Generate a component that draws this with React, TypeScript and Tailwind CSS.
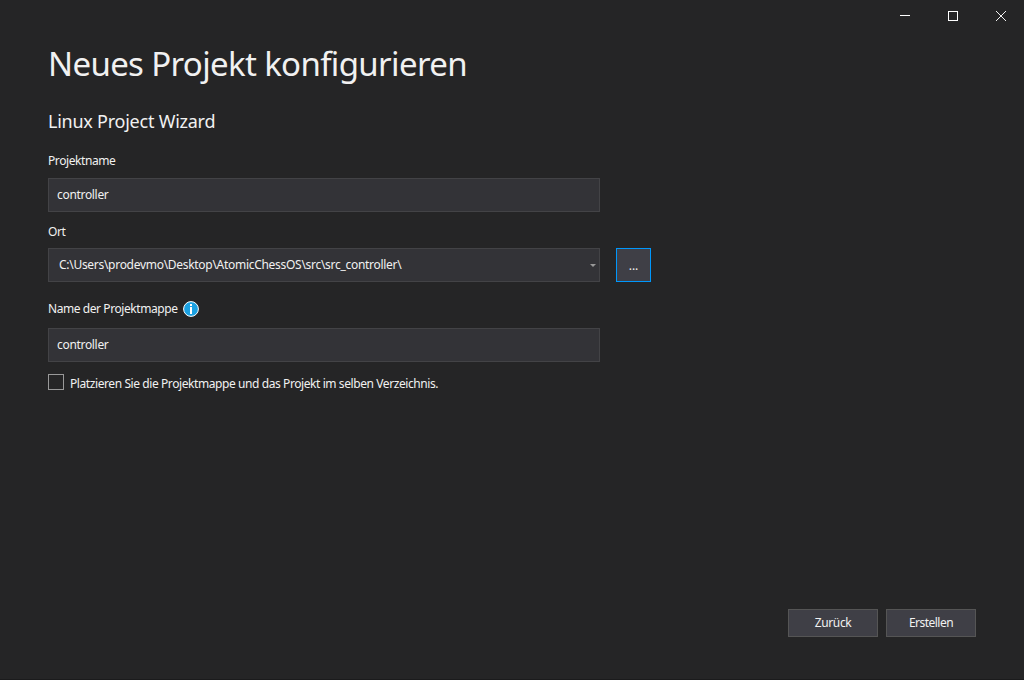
import React from "react";

const inputClass = "flex h-[34px] w-[552px] items-center border border-[#434346] bg-[#333337] text-[12px]";

export default function App() {
  return (
    <main className="flex h-[680px] w-[1024px] flex-col overflow-hidden border-b border-[#1b1b1c] bg-[#252526] font-['Noto_Sans','Open_Sans',sans-serif] text-[12px] text-[#f1f1f1]">
      <header className="flex h-8 justify-end">
        <button aria-label="Minimieren" className="flex w-12 items-start justify-center pt-[11px] pl-[2px]"><svg width="10" height="10" shapeRendering="crispEdges"><path d="M0 4.5H10" stroke="#fff" /></svg></button>
        <button aria-label="Maximieren" className="flex w-12 items-start justify-center pt-[11px] pl-[2px]"><svg width="10" height="10" shapeRendering="crispEdges"><path d="M.5 .5H9.5V9.5H.5Z" stroke="#fff" fill="none" /></svg></button>
        <button aria-label="Schließen" className="flex w-12 items-start justify-center pt-[11px] pl-[2px]"><svg width="10" height="10"><path d="M0 0L10 10M10 0L0 10" stroke="#f1f1f1" fill="none" /></svg></button>
      </header>
      <section className="flex flex-1 flex-col items-start px-12">
        <h1 className="mt-2 h-12 whitespace-nowrap text-[33px] leading-[48px] tracking-[-0.65px]"><span>Neues Projekt konfigurieren</span></h1>
        <h2 className="mt-[19px] h-7 whitespace-nowrap text-[18px] leading-7 tracking-[-0.24px]"><span>Linux Project Wizard</span></h2>
        <label className="mt-4 h-5 leading-5 tracking-[-0.42px]"><span>Projektname</span></label>
        <div className={inputClass + " mt-[7px] pl-2 tracking-[-0.32px]"}><span>controller</span></div>
        <label className="mt-[10px] h-5 leading-5 tracking-[-0.4px]"><span>Ort</span></label>
        <div className="mt-[6px] flex gap-4">
          <div className={inputClass + " justify-between pl-[10px] pr-1 tracking-[-0.29px]"}><span>C:\Users\prodevmo\Desktop\AtomicChessOS\src\src_controller\</span><svg className="-mr-px mt-px" width="6" height="3"><path d="M0 0H6L3 3Z" fill="#999" /></svg></div>
          <button className="h-[34px] w-[35px] border border-[#0097fb] bg-[#3f3f46] pt-[2px]"><span>...</span></button>
        </div>
        <label className="mt-[17px] flex h-5 items-center gap-[6px] tracking-[-0.43px]"><span>Name der Projektmappe</span><svg width="16" height="16" viewBox="0 0 16 16"><circle cx="8" cy="8" r="7.4" fill="#1ba1e2" stroke="#fff" /><path d="M7 3h2v2H7zM7 6h2v7H7z" fill="#fff" /></svg></label>
        <div className={inputClass + " mt-[9px] pl-2 tracking-[-0.32px]"}><span>controller</span></div>
        <label className="mt-3 flex h-5 items-center gap-[6px] tracking-[-0.415px]"><i className="mb-1 size-4 border border-[#999] bg-[#252526]" /><span>Platzieren Sie die Projektmappe und das Projekt im selben Verzeichnis.</span></label>
      </section>
      <footer className="mb-[42px] flex justify-end gap-2 pr-12">
        <button className="h-7 w-[90px] border border-[#555] bg-[#3f3f46] tracking-[-0.35px]"><span>Zurück</span></button>
        <button className="h-7 w-[90px] border border-[#555] bg-[#3f3f46] tracking-[-0.52px]"><span>Erstellen</span></button>
      </footer>
    </main>
  );
}
